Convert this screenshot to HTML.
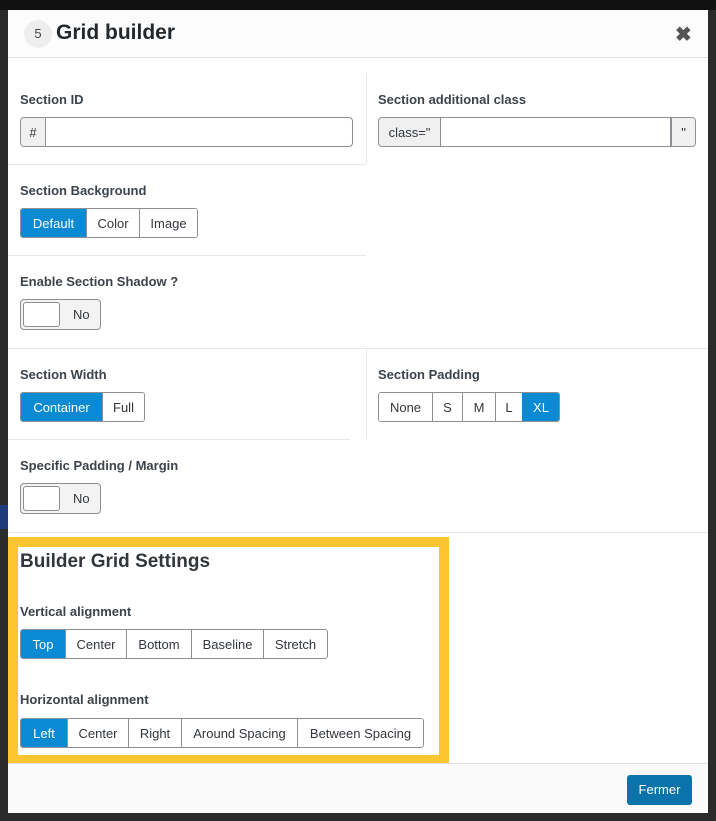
<!DOCTYPE html>
<html><head><meta charset="utf-8"><style>
*{box-sizing:border-box;margin:0;padding:0}
body{width:716px;height:821px;background:#2b2b2b;font-family:"Liberation Sans",Arial,sans-serif;color:#32373c;position:relative;overflow:hidden}
.top{position:absolute;left:0;top:0;width:716px;height:10px;background:#111}
.modal{position:absolute;left:8px;top:10px;width:700px;height:803px;background:#fff}
.hdr{position:absolute;left:0;top:0;width:700px;height:48px;background:#fcfcfc;border-bottom:1px solid #ddd}
.badge{position:absolute;left:16px;top:10px;width:28px;height:28px;border-radius:50%;background:#eee;font-size:13px;text-align:center;line-height:28px;color:#444}
.title{position:absolute;left:48px;top:11px;font-size:21px;font-weight:bold;color:#23282d}
.x{position:absolute;left:667px;top:12px;font-size:20px;font-weight:bold;color:#555}
.a{position:absolute}
.lbl{position:absolute;font-size:13px;font-weight:bold;color:#3c434a}
.hl{position:absolute;height:1px;background:#e8e8ec}
.vl{position:absolute;width:1px;background:#e8e8ec}
.grp{position:absolute;display:flex;height:30px;border:1px solid #8c8f94;border-radius:3px;overflow:hidden;font-size:13px}
.grp span{display:flex;align-items:center;justify-content:center;border-left:1px solid #8c8f94;color:#32373c;background:#fff}
.grp span:first-child{border-left:none}
.grp span.on{background:#0a8ad2;color:#fff;border-color:#0a8ad2}
.tog{position:absolute;width:81px;height:31px;border:1px solid #8c8f94;border-radius:4px;background:#f3f3f3;font-size:13px}
.tog i{position:absolute;left:2px;top:2px;width:37px;height:25px;background:#fff;border:1px solid #8c8f94;border-radius:3px}
.tog b{position:absolute;left:52px;top:7px;font-weight:normal}
.inp{position:absolute;height:30px;border:1px solid #8c8f94;border-radius:4px;display:flex;font-size:13px;overflow:hidden;background:#fff}
.inp span{background:#f0f0f1;display:flex;align-items:center;justify-content:center;border-right:1px solid #8c8f94}
.foot{position:absolute;left:0;top:753px;width:700px;height:50px;background:#fafafa;border-top:1px solid #e0e0e0}
.btn{position:absolute;left:619px;top:11px;width:65px;height:30px;background:#0a73aa;color:#fff;border-radius:3px;font-size:13px;text-align:center;line-height:30px}
</style></head><body>
<div class="top"></div>
<div class="a" style="left:0;top:505px;width:8px;height:24px;background:#1d3a7a"></div>
<div class="modal">
 <div class="hdr"><div class="badge">5</div><div class="title">Grid builder</div><div class="x">✖</div></div>
 <div class="vl" style="left:358px;top:63px;height:91px"></div>
 <div class="lbl" style="left:12px;top:82px">Section ID</div>
 <div class="inp" style="left:12px;top:107px;width:333px"><span style="width:25px">#</span></div>
 <div class="lbl" style="left:370px;top:82px">Section additional class</div>
 <div class="inp" style="left:370px;top:107px;width:318px"><span style="width:62px">class="</span><span style="flex:1;background:#fff"></span><span style="width:24px;border-right:none;border-left:1px solid #8c8f94">"</span></div>
 <div class="hl" style="left:0;top:154px;width:358px"></div>
 <div class="lbl" style="left:12px;top:173px">Section Background</div>
 <div class="grp" style="left:12px;top:198px"><span class="on" style="width:65px">Default</span><span style="width:53px">Color</span><span style="width:58px">Image</span></div>
 <div class="hl" style="left:0;top:245px;width:358px"></div>
 <div class="lbl" style="left:12px;top:264px">Enable Section Shadow ?</div>
 <div class="tog" style="left:12px;top:289px"><i></i><b>No</b></div>
 <div class="hl" style="left:0;top:338px;width:700px"></div>
 <div class="vl" style="left:358px;top:338px;height:91px"></div>
 <div class="lbl" style="left:12px;top:357px">Section Width</div>
 <div class="grp" style="left:12px;top:382px"><span class="on" style="width:81px">Container</span><span style="width:42px">Full</span></div>
 <div class="lbl" style="left:370px;top:357px">Section Padding</div>
 <div class="grp" style="left:370px;top:382px"><span style="width:53px">None</span><span style="width:30px">S</span><span style="width:33px">M</span><span style="width:27px">L</span><span class="on" style="width:37px">XL</span></div>
 <div class="hl" style="left:0;top:429px;width:342px"></div>
 <div class="lbl" style="left:12px;top:448px">Specific Padding / Margin</div>
 <div class="tog" style="left:12px;top:473px"><i></i><b>No</b></div>
 <div class="hl" style="left:0;top:522px;width:700px"></div>
 <div class="a" style="left:0;top:527px;width:441px;height:228px;border:10px solid #fdc52f"></div>
 <div class="a" style="left:12px;top:541px;font-size:19px;font-weight:bold;color:#32373c">Builder Grid Settings</div>
 <div class="lbl" style="left:12px;top:594px">Vertical alignment</div>
 <div class="grp" style="left:12px;top:619px"><span class="on" style="width:44px">Top</span><span style="width:61px">Center</span><span style="width:65px">Bottom</span><span style="width:72px">Baseline</span><span style="width:64px">Stretch</span></div>
 <div class="lbl" style="left:12px;top:682px">Horizontal alignment</div>
 <div class="grp" style="left:12px;top:708px"><span class="on" style="width:46px">Left</span><span style="width:61px">Center</span><span style="width:53px">Right</span><span style="width:116px">Around Spacing</span><span style="width:126px">Between Spacing</span></div>
 <div class="foot"><div class="btn">Fermer</div></div>
</div>
</body></html>
